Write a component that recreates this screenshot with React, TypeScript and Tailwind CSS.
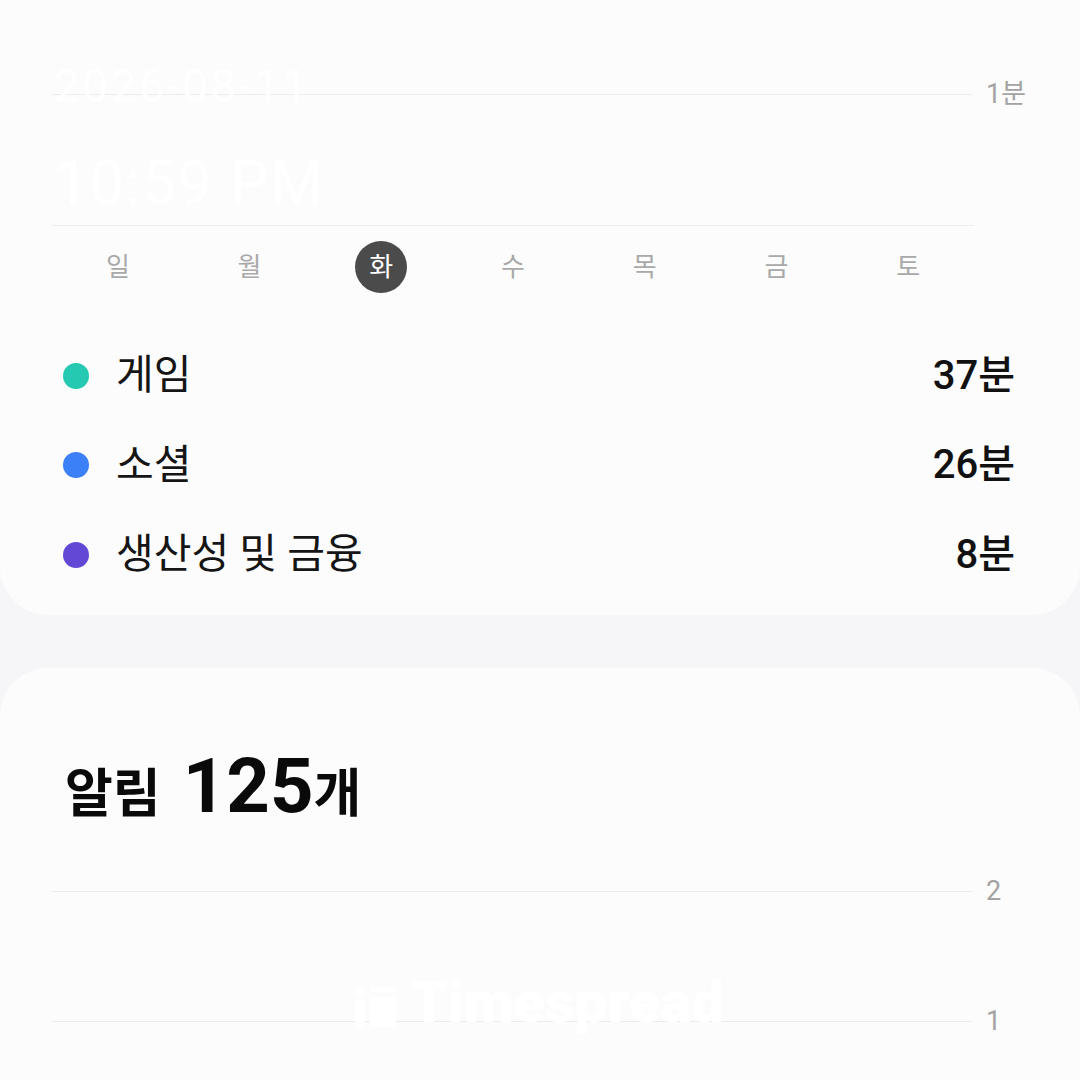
import React from 'react';

const FONT = "font-['Roboto','Noto_Sans_CJK_KR',sans-serif]";

const DAYS = ['일', '월', '화', '수', '목', '금', '토'];
const SELECTED = 2;

const CATEGORIES = [
  { name: '게임', value: '37분', color: 'bg-[#25c9b2]' },
  { name: '소셜', value: '26분', color: 'bg-[#3b80f6]' },
  { name: '생산성 및 금융', value: '8분', color: 'bg-[#6248d4]' },
];

const GridLine: React.FC<{ label?: string }> = ({ label }) => (
  <div className="flex items-center h-[30px]">
    <div className="flex-1 h-px bg-[#ececec]" />
    <div className="w-[106px] pl-[14px] text-[27px] text-[#a3a3a3] leading-none">{label}</div>
  </div>
);

const Logo: React.FC = () => (
  <div className="flex items-end gap-[14px] text-white">
    <svg width="42" height="40" viewBox="0 0 42 40" className="mb-[4px]">
      <circle cx="5" cy="5" r="5" fill="#ffffff" />
      <rect x="0" y="12" width="10" height="28" fill="#ffffff" />
      <rect x="15" y="0" width="26" height="5" fill="#ffffff" />
      <rect x="15" y="10" width="26" height="30" fill="#ffffff" />
    </svg>
    <span className="text-[58px] font-black leading-none">Timespread</span>
  </div>
);

export default function App() {
  return (
    <div className={`${FONT} w-[1080px] h-[1080px] overflow-hidden bg-[#f6f6f8]`}>
      {/* Usage card */}
      <div className="bg-[#fcfcfc] rounded-b-[48px] pl-[52px] pr-[2px] pt-[79px] h-[615px]">
        <div className="relative">
          <GridLine label="1분" />
          <div className="h-[116px]" />
          <div className="pr-[104px]">
            <div className="h-px bg-[#ececec]" />
          </div>
          <div className="absolute left-[2px] top-[-16px] text-white leading-none">
            <div className="text-[46px] tracking-[2.4px]">2026-08-11</div>
            <div className="mt-[44px] text-[61px] tracking-[1.5px]">10:59 PM</div>
          </div>
        </div>

        <div className="grid grid-cols-7 mr-[104px] mt-[15px] h-[52px]">
          {DAYS.map((d, i) => (
            <div key={d} className="flex items-center justify-center">
              {i === SELECTED ? (
                <div className="w-[52px] h-[52px] rounded-full bg-[#4b4b4b] text-white text-[26px] flex items-center justify-center">
                  {d}
                </div>
              ) : (
                <span className="text-[26px] text-[#a9a9a9]">{d}</span>
              )}
            </div>
          ))}
        </div>

        <div className="mt-[38px] pr-[63px]">
          {CATEGORIES.map((c) => (
            <div key={c.name} className="flex items-center h-[89.5px]">
              <div className={`w-[26px] h-[26px] rounded-full ml-[11px] ${c.color}`} />
              <span className="ml-[27px] text-[41px] text-[#151515]">{c.name}</span>
              <span className="ml-auto text-[40px] font-medium text-[#111]">{c.value}</span>
            </div>
          ))}
        </div>
      </div>

      {/* Notifications card */}
      <div className="relative mt-[53px] bg-[#fcfcfc] rounded-t-[48px] h-[500px] pl-[52px] pr-[2px]">
        <div className="pt-[80px] pl-[13px] flex items-baseline font-bold text-[#0a0a0a] leading-none">
          <span className="text-[52px]">알림</span>
          <span className="ml-[22px] text-[76px]">125</span>
          <span className="text-[52px]">개</span>
        </div>
        <div className="mt-[52px]">
          <GridLine label="2" />
          <div className="h-[100px]" />
          <GridLine label="1" />
        </div>
        <div className="absolute left-[355px] top-[305px]">
          <Logo />
        </div>
      </div>
    </div>
  );
}
